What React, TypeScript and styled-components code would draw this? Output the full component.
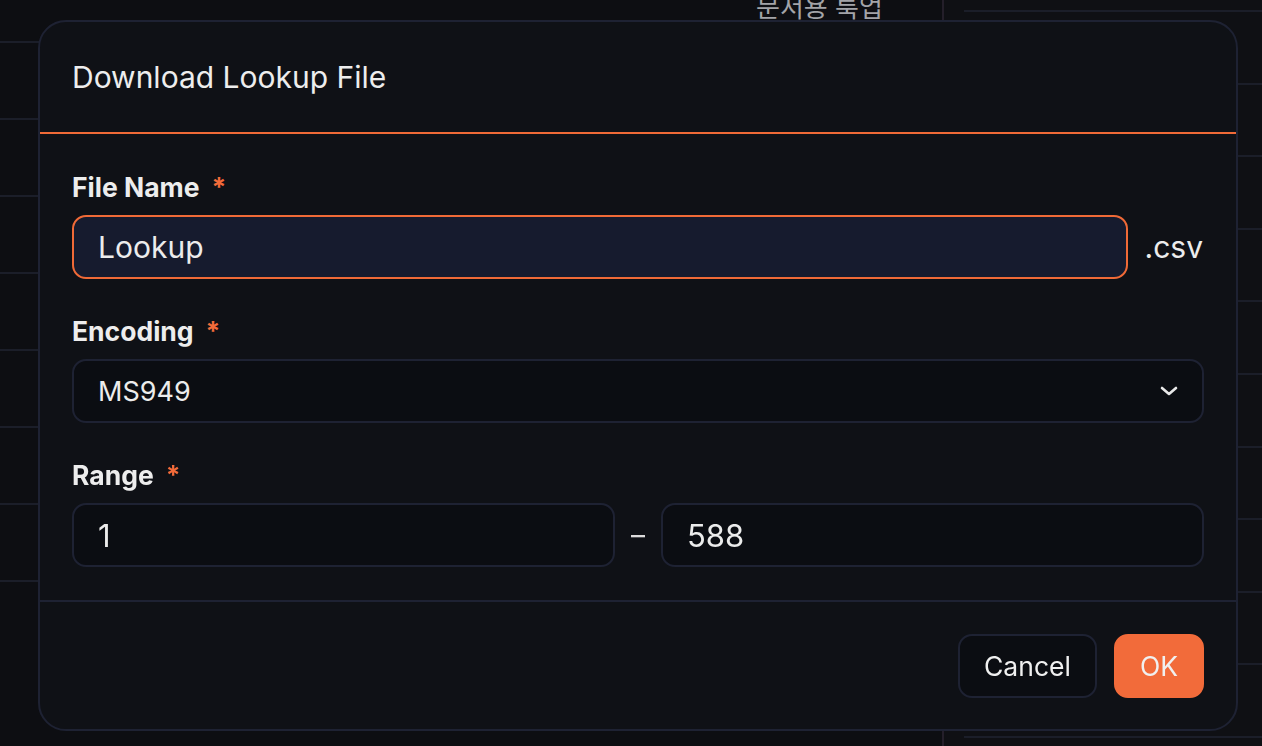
import { createGlobalStyle } from 'styled-components';
import styled from 'styled-components';

const GlobalStyle = createGlobalStyle`
  html, body {
    margin: 0;
    padding: 0;
    background: #0e0f13;
    font-family: Inter, "Noto Sans", "Noto Sans CJK KR", sans-serif;
    color: #ececec;
  }
  * { box-sizing: border-box; }
`;

const Page = styled.div`
  display: grid;
  grid-template-columns: 944px 1fr;
  height: 746px;
  overflow: hidden;
  background: #0f1014;
`;

const LeftPane = styled.div`
  border-right: 2px solid #241f2a;
  background: #0d0e12;
`;

const LeftRow = styled.div<{ $h: number }>`
  display: grid;
  grid-template-columns: 1fr 186px;
  height: ${(p) => p.$h}px;
  border-bottom: 2px solid #1b1e29;
`;

const HeadCell = styled.div`
  margin-top: -8px;
  font-size: 26px;
  line-height: 32px;
  color: #a3a4a8;
`;

const RightPane = styled.div`
  padding-left: 20px;
  padding-top: 10px;
`;

const RightRow = styled.div`
  height: 72.6px;
  border-top: 2px solid #1b1e29;
`;

const Overlay = styled.div`
  position: fixed;
  inset: 0;
  padding: 20px 0 0 38px;
`;

const Dialog = styled.div`
  width: 1200px;
  height: 711px;
  background: #0f1116;
  border: 2px solid #1e2233;
  border-radius: 28px;
  display: flex;
  flex-direction: column;
`;

const Header = styled.div`
  padding: 31px 32px 31px;
  border-bottom: 2px solid #f06a37;
`;

const Title = styled.h2`
  margin: 0;
  font-size: 30px;
  line-height: 48px;
  font-weight: 400;
  color: #ededed;
`;

const Body = styled.div`
  flex: 1;
  padding: 33px 32px 33px 32px;
  display: flex;
  flex-direction: column;
  gap: 32px;
`;

const Field = styled.div`
  display: flex;
  flex-direction: column;
  gap: 8px;
`;

const Label = styled.div`
  font-size: 26.5px;
  line-height: 40px;
  font-weight: 700;
  color: #ededed;
`;

const Required = styled.span`
  color: #f26b3a;
  margin-left: 12px;
`;

const Row = styled.div<{ $gap: number }>`
  display: flex;
  align-items: center;
  gap: ${(p) => p.$gap}px;

  & > div {
    flex: 1 1 0;
    min-width: 0;
  }
`;

const Control = styled.div<{ $focused?: boolean; $size: number }>`
  height: 64px;
  display: flex;
  align-items: center;
  justify-content: space-between;
  padding: 0 24px;
  border-radius: 14px;
  border: 2px solid ${(p) => (p.$focused ? '#f06a37' : '#1e2233')};
  background: ${(p) => (p.$focused ? '#161b2e' : '#0b0d12')};
  font-size: ${(p) => p.$size}px;
  color: #ececec;
`;

const Suffix = styled.span`
  font-size: 30px;
  color: #ececec;
  margin-right: 1px;
`;

const Dash = styled.span`
  font-size: 28px;
  color: #dcdcdc;
`;

const Footer = styled.div`
  border-top: 2px solid #1e2233;
  padding: 32px 32px 31px;
  display: flex;
  justify-content: flex-end;
  gap: 17px;
`;

const Button = styled.button<{ $primary?: boolean }>`
  height: 64px;
  padding: 0 24px;
  border-radius: 14px;
  font-family: inherit;
  font-size: 26.5px;
  color: #f0f0f0;
  border: 2px solid ${(p) => (p.$primary ? '#f26b3a' : '#1e2233')};
  background: ${(p) => (p.$primary ? '#f26b3a' : '#0b0d12')};
`;

const Chevron = () => (
  <svg width="18" height="10" viewBox="0 0 18 10" fill="none">
    <path d="M2 2l7 6 7-6" stroke="#e8e8e8" strokeWidth="2.6" strokeLinecap="round" strokeLinejoin="round" />
  </svg>
);

export default function App() {
  const leftRows = [43, 77, 77, 77, 77, 77, 77, 77];
  const rightRows = Array.from({ length: 11 });
  return (
    <>
      <GlobalStyle />
      <Page>
        <LeftPane>
          {leftRows.map((h, i) => (
            <LeftRow key={i} $h={h}>
              <div />
              {i === 0 && <HeadCell>문서용 툭업</HeadCell>}
            </LeftRow>
          ))}
        </LeftPane>
        <RightPane>
          {rightRows.map((_, i) => (
            <RightRow key={i} />
          ))}
        </RightPane>
      </Page>
      <Overlay>
        <Dialog>
          <Header>
            <Title>Download Lookup File</Title>
          </Header>
          <Body>
            <Field>
              <Label>
                File Name<Required>*</Required>
              </Label>
              <Row $gap={17}>
                <Control $focused $size={30}>Lookup</Control>
                <Suffix>.csv</Suffix>
              </Row>
            </Field>
            <Field>
              <Label>
                Encoding<Required>*</Required>
              </Label>
              <Control $size={27}>
                MS949
                <Chevron />
              </Control>
            </Field>
            <Field>
              <Label>
                Range<Required>*</Required>
              </Label>
              <Row $gap={16}>
                <Control $size={31}>1</Control>
                <Dash>–</Dash>
                <Control $size={31}>588</Control>
              </Row>
            </Field>
          </Body>
          <Footer>
            <Button>Cancel</Button>
            <Button $primary>OK</Button>
          </Footer>
        </Dialog>
      </Overlay>
    </>
  );
}
